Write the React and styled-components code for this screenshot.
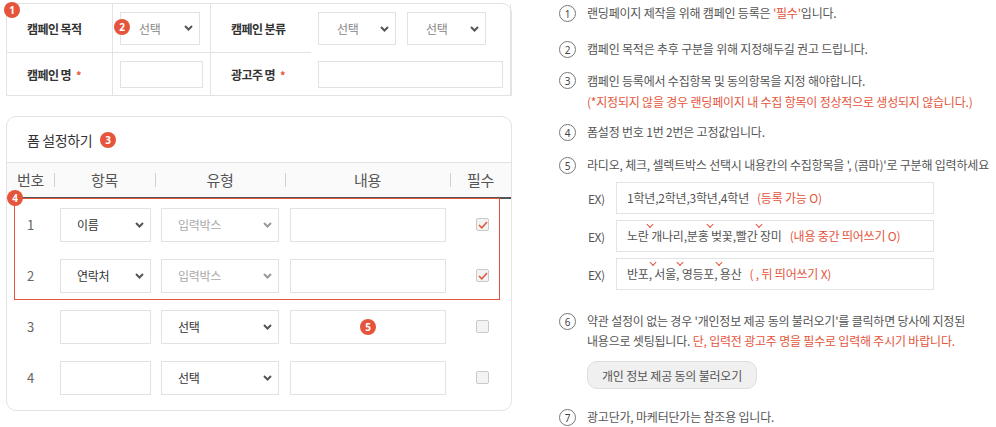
import styled, { createGlobalStyle } from "styled-components"

const RED = "#e4553b"

const GlobalStyle = createGlobalStyle`
  body {
    margin: 0;
    background: #fff;
    font-family: "Noto Sans CJK KR", "Noto Sans", sans-serif;
    color: #555;
  }
  * { box-sizing: border-box; }
`

const Page = styled.div`
  display: flex;
  gap: 47px;
  width: 996px;
  height: 427px;
  padding: 3px 0 0 6px;
  overflow: hidden;
`

const LeftColumn = styled.div`
  width: 506px;
  flex: none;
  display: flex;
  flex-direction: column;
  gap: 20px;
`

const Dot = styled.span`
  display: inline-flex;
  align-items: center;
  justify-content: center;
  flex: none;
  width: 16px;
  height: 16px;
  border-radius: 50%;
  background: ${RED};
  color: #fff;
  font: 700 10px/1 "Noto Sans", sans-serif;
  letter-spacing: 0;
`

const PinnedDot = styled(Dot)`
  position: absolute;
  top: ${p => p.$top}px;
  left: ${p => p.$left}px;
  z-index: 2;
`

/* campaign info table */
const InfoTable = styled.div`
  position: relative;
  display: grid;
  grid-template-columns: 106px 98px 100px 200px;
  grid-template-rows: 49px 42px;
  border: 1px solid #e3e3e3;
  border-radius: 0 10px 0 0;
`

const InfoCell = styled.div`
  position: relative;
  display: flex;
  align-items: center;
  gap: 11px;
  padding: 0 ${p => (p.$label ? 20 : 7)}px;
  border-right: 1px solid #e3e3e3;
  border-bottom: 1px solid #e3e3e3;
  font-size: 12px;
  font-weight: 700;
  letter-spacing: -0.6px;
  color: #333;
  white-space: nowrap;

  &:nth-child(4n) { border-right: none; }
  &:nth-child(n + 5) { border-bottom: none; }
`

const Star = styled.span`
  color: ${RED};
  font-size: 11px;
  margin-left: 5px;
`

const Chevron = () => (
  <svg width="9" height="6" viewBox="0 0 9 6">
    <path d="M1 1l3.5 3.5L8 1" fill="none" stroke="currentColor" strokeWidth="2" />
  </svg>
)

const SelectBox = styled.div`
  position: relative;
  display: flex;
  align-items: center;
  justify-content: space-between;
  width: ${p => p.$w}px;
  height: ${p => p.$h || 34}px;
  padding: 0 6px 0 ${p => p.$pl || 16}px;
  border: 1px solid #e2e2e2;
  background: #fff;
  font-size: 12px;
  font-weight: 400;
  letter-spacing: -0.3px;
  color: ${p => (p.$disabled ? "#aaa" : p.$muted ? "#888" : "#333")};

  svg { color: ${p => (p.$disabled ? "#999" : "#555")}; }
`

const Field = styled.div`
  display: flex;
  align-items: center;
  justify-content: center;
  width: ${p => p.$w}px;
  height: ${p => p.$h || 34}px;
  border: 1px solid #e2e2e2;
  background: #fff;
`

/* form settings card */
const FormCard = styled.section`
  height: 295px;
  border: 1px solid #e3e3e3;
  border-radius: 10px;
`

const CardTitle = styled.h3`
  display: flex;
  align-items: center;
  gap: 8px;
  height: 46px;
  margin: 0;
  padding-left: 20px;
  border-bottom: 1px solid #e3e3e3;
  font-size: 14px;
  font-weight: 400;
  letter-spacing: -0.4px;
  color: #333;
`

const Cols = styled.div`
  display: grid;
  grid-template-columns: 47px 101px 130px 165px 61px;
  align-items: center;
`

const HeadRow = styled(Cols)`
  height: 36px;
  background: #fafafa;
  border-bottom: 2px solid #555;
`

const HeadCell = styled.div`
  position: relative;
  text-align: center;
  font-size: 15px;
  line-height: 20px;
  color: #555;
  letter-spacing: -0.4px;

  &::before {
    content: "";
    display: ${p => (p.$sep ? "block" : "none")};
    position: absolute;
    left: 0;
    top: 3px;
    height: 14px;
    width: 1px;
    background: #d0d0d0;
  }
`

const Row = styled(Cols)`
  height: 51px;
`

const Cell = styled.div`
  display: flex;
  align-items: center;
  justify-content: ${p => (p.$center ? "center" : "flex-start")};
  padding-left: ${p => (p.$pl === undefined ? 6 : p.$pl)}px;
  font-size: 13px;
  color: #666;
`

const FixedGroup = styled.div`
  position: relative;

  &::after {
    content: "";
    position: absolute;
    top: -1px;
    left: 7px;
    right: 11px;
    bottom: 1px;
    border: 1px solid ${RED};
    pointer-events: none;
  }
`

const CheckBox = styled.span`
  display: flex;
  align-items: center;
  justify-content: center;
  width: 13px;
  height: 13px;
  border: 1px solid #c9c9c9;
  border-radius: 2px;
  background: #f3f3f3;
`

/* guide column */
const Guide = styled.div`
  width: 437px;
  display: flex;
  flex-direction: column;
`

const GuideItem = styled.div`
  display: flex;
  gap: 11px;
  margin-top: ${p => p.$mt || 0}px;
  font-size: 12px;
  line-height: ${p => p.$lh || 20}px;
  letter-spacing: -0.2px;
  color: #555;
  white-space: nowrap;
`

const Num = styled.span`
  flex: none;
  display: flex;
  align-items: center;
  justify-content: center;
  width: 17px;
  height: 17px;
  margin-top: 2px;
  border: 1px solid #777;
  border-radius: 50%;
  font: 10px/1 "Noto Sans", sans-serif;
  color: #444;
  letter-spacing: 0;
`

const Red = styled.span`
  color: ${RED};
  margin-left: ${p => p.$ml || 0}px;
`

const ExRow = styled.div`
  display: flex;
  align-items: center;
  margin: ${p => p.$mt || 0}px 0 0 29px;
  font-size: 12px;
  letter-spacing: -0.2px;
  color: #555;
`

const ExLabel = styled.span`
  width: 28px;
  letter-spacing: -0.5px;
`

const ExBox = styled.div`
  display: flex;
  align-items: center;
  width: 318px;
  height: 32px;
  padding: 0 10px;
  border: 1px solid #e3e3e3;
  line-height: 20px;
  white-space: pre;
`

const Gap = styled.span`
  position: relative;

  &::before {
    content: "";
    position: absolute;
    left: 50%;
    top: -4px;
    width: 4px;
    height: 4px;
    border-right: 1px solid ${RED};
    border-bottom: 1px solid ${RED};
    transform: translateX(-50%) rotate(45deg);
  }
`

const LoadButton = styled.button`
  align-self: flex-start;
  margin: 10px 0 0 28px;
  width: 170px;
  height: 30px;
  border: 1px solid #dedede;
  border-radius: 10px;
  background: #f0f0f0;
  font-family: inherit;
  font-size: 12px;
  letter-spacing: -0.2px;
  color: #555;
`

const formRows = [
  { no: 1, item: "이름", type: "입력박스", fixed: true },
  { no: 2, item: "연락처", type: "입력박스", fixed: true },
  { no: 3, type: "선택", badge: true },
  { no: 4, type: "선택" },
]

function FormRow({ row }) {
  return (
    <Row>
      <Cell $pl={0} $center>{row.no}</Cell>
      <Cell>
        {row.fixed ? (
          <SelectBox $w={91}>{row.item}<Chevron /></SelectBox>
        ) : (
          <Field $w={91} />
        )}
      </Cell>
      <Cell>
        <SelectBox $w={118} $disabled={row.fixed}>{row.type}<Chevron /></SelectBox>
      </Cell>
      <Cell $pl={5}>
        <Field $w={156}>{row.badge && <Dot>5</Dot>}</Field>
      </Cell>
      <Cell $pl={4} $center>
        <CheckBox>
          {row.fixed && (
            <svg width="10" height="8" viewBox="0 0 10 8">
              <path d="M1 4l2.8 2.8L9 1" fill="none" stroke={RED} strokeWidth="1.5" />
            </svg>
          )}
        </CheckBox>
      </Cell>
    </Row>
  )
}

function App() {
  return (
    <Page>
      <GlobalStyle />
      <LeftColumn>
        <InfoTable>
          <PinnedDot $top={-2} $left={-3}>1</PinnedDot>
          <InfoCell $label>캠페인 목적</InfoCell>
          <InfoCell>
            <PinnedDot $top={15} $left={1}>2</PinnedDot>
            <SelectBox $w={80} $h={33} $pl={18} $muted>선택<Chevron /></SelectBox>
          </InfoCell>
          <InfoCell $label>캠페인 분류</InfoCell>
          <InfoCell>
            <SelectBox $w={78} $h={33} $pl={18} $muted>선택<Chevron /></SelectBox>
            <SelectBox $w={79} $h={33} $pl={18} $muted>선택<Chevron /></SelectBox>
          </InfoCell>
          <InfoCell $label><span>캠페인 명<Star>*</Star></span></InfoCell>
          <InfoCell><Field $w={84} $h={27} /></InfoCell>
          <InfoCell $label><span>광고주 명<Star>*</Star></span></InfoCell>
          <InfoCell><Field $w={186} $h={27} /></InfoCell>
        </InfoTable>

        <FormCard>
          <CardTitle>폼 설정하기 <Dot>3</Dot></CardTitle>
          <HeadRow>
            <HeadCell>번호</HeadCell>
            <HeadCell $sep>항목</HeadCell>
            <HeadCell $sep>유형</HeadCell>
            <HeadCell $sep>내용</HeadCell>
            <HeadCell $sep>필수</HeadCell>
          </HeadRow>
          <FixedGroup>
            <PinnedDot $top={-9} $left={0}>4</PinnedDot>
            {formRows.filter(r => r.fixed).map(r => <FormRow key={r.no} row={r} />)}
          </FixedGroup>
          {formRows.filter(r => !r.fixed).map(r => <FormRow key={r.no} row={r} />)}
        </FormCard>
      </LeftColumn>

      <Guide>
        <GuideItem>
          <Num>1</Num>
          <span>랜딩페이지 제작을 위해 캠페인 등록은 <Red>'필수'</Red>입니다.</span>
        </GuideItem>
        <GuideItem $mt={16}>
          <Num>2</Num>
          <span>캠페인 목적은 추후 구분을 위해 지정해두길 권고 드립니다.</span>
        </GuideItem>
        <GuideItem $mt={11} $lh={21}>
          <Num>3</Num>
          <span>
            캠페인 등록에서 수집항목 및 동의항목을 지정 해야합니다.<br />
            <Red>(*지정되지 않을 경우 랜딩페이지 내 수집 항목이 정상적으로 생성되지 않습니다.)</Red>
          </span>
        </GuideItem>
        <GuideItem $mt={10}>
          <Num>4</Num>
          <span>폼설정 번호 1번 2번은 고정값입니다.</span>
        </GuideItem>
        <GuideItem $mt={13}>
          <Num>5</Num>
          <span>라디오, 체크, 셀렉트박스 선택시 내용칸의 수집항목을 ', (콤마)'로 구분해 입력하세요</span>
        </GuideItem>

        <ExRow $mt={7}>
          <ExLabel>EX)</ExLabel>
          <ExBox>1학년,2학년,3학년,4학년<Red $ml={8}>(등록 가능 O)</Red></ExBox>
        </ExRow>
        <ExRow $mt={6}>
          <ExLabel>EX)</ExLabel>
          <ExBox>
            노란<Gap>{" "}</Gap>개나리,분홍<Gap>{" "}</Gap>벚꽃,빨간<Gap>{" "}</Gap>장미
            <Red $ml={8}>(내용 중간 띄어쓰기 O)</Red>
          </ExBox>
        </ExRow>
        <ExRow $mt={6}>
          <ExLabel>EX)</ExLabel>
          <ExBox>
            반포,<Gap>{" "}</Gap>서울,<Gap>{" "}</Gap>영등포,<Gap>{" "}</Gap>용산
            <Red $ml={8}>( , 뒤 띄어쓰기 X)</Red>
          </ExBox>
        </ExRow>

        <GuideItem $mt={21}>
          <Num>6</Num>
          <span>
            약관 설정이 없는 경우 '개인정보 제공 동의 불러오기'를 클릭하면 당사에 지정된<br />
            내용으로 셋팅됩니다. <Red>단, 입력전 광고주 명을 필수로 입력해 주시기 바랍니다.</Red>
          </span>
        </GuideItem>
        <LoadButton type="button">개인 정보 제공 동의 불러오기</LoadButton>
        <GuideItem $mt={18}>
          <Num>7</Num>
          <span>광고단가, 마케터단가는 참조용 입니다.</span>
        </GuideItem>
      </Guide>
    </Page>
  )
}

export default App
